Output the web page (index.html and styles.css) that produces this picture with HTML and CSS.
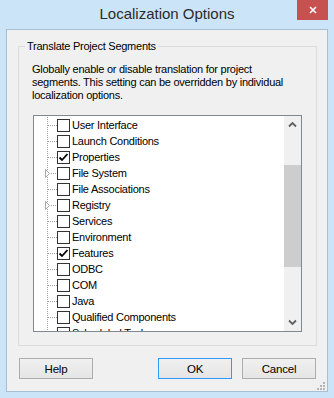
FILE: index.html
```html
<!DOCTYPE html>
<html lang="en">
<head>
    <meta charset="UTF-8">
    <title>Localization Options</title>
    <link rel="stylesheet" href="styles.css">
</head>
<body>
    <div class="window">
        <!-- Barre de titre -->
        <div class="titlebar">
            <span></span>
            <h1 class="title">Localization Options</h1>
            <button class="close" aria-label="Close">
                <svg width="8" height="8" viewBox="0 0 8 8"><path d="M1 1L7 7M7 1L1 7" stroke="#fff" stroke-width="1.6"/></svg>
            </button>
        </div>

        <div class="client">
            <fieldset class="group">
                <legend>Translate Project Segments</legend>
                <p class="desc">Globally enable or disable translation for project<br>segments. This setting can be overridden by individual<br>localization options.</p>

                <div class="tree">
                    <ul class="items">
                        <li class="item"><svg class="branch" width="23" height="16"><path d="M13.5 0V16M14 8.5H23" stroke="#a0a0a0" stroke-dasharray="1 1"/></svg><span class="check"></span><span class="label">User Interface</span></li>
                        <li class="item"><svg class="branch" width="23" height="16"><path d="M13.5 0V16M14 8.5H23" stroke="#a0a0a0" stroke-dasharray="1 1"/></svg><span class="check"></span><span class="label">Launch Conditions</span></li>
                        <li class="item"><svg class="branch" width="23" height="16"><path d="M13.5 0V16M14 8.5H23" stroke="#a0a0a0" stroke-dasharray="1 1"/></svg><span class="check on"><svg width="11" height="11" viewBox="0 0 11 11"><path d="M1.5 5.5L4 8L9.5 2" fill="none" stroke="#000" stroke-width="1.8"/></svg></span><span class="label">Properties</span></li>
                        <li class="item"><svg class="branch" width="23" height="16"><path d="M13.5 0V16M17 8.5H23" stroke="#a0a0a0" stroke-dasharray="1 1"/><path d="M11.5 4.5L15.5 8.5L11.5 12.5Z" fill="#fff" stroke="#a6a6a6"/></svg><span class="check"></span><span class="label">File System</span></li>
                        <li class="item"><svg class="branch" width="23" height="16"><path d="M13.5 0V16M14 8.5H23" stroke="#a0a0a0" stroke-dasharray="1 1"/></svg><span class="check"></span><span class="label">File Associations</span></li>
                        <li class="item"><svg class="branch" width="23" height="16"><path d="M13.5 0V16M17 8.5H23" stroke="#a0a0a0" stroke-dasharray="1 1"/><path d="M11.5 4.5L15.5 8.5L11.5 12.5Z" fill="#fff" stroke="#a6a6a6"/></svg><span class="check"></span><span class="label">Registry</span></li>
                        <li class="item"><svg class="branch" width="23" height="16"><path d="M13.5 0V16M14 8.5H23" stroke="#a0a0a0" stroke-dasharray="1 1"/></svg><span class="check"></span><span class="label">Services</span></li>
                        <li class="item"><svg class="branch" width="23" height="16"><path d="M13.5 0V16M14 8.5H23" stroke="#a0a0a0" stroke-dasharray="1 1"/></svg><span class="check"></span><span class="label">Environment</span></li>
                        <li class="item"><svg class="branch" width="23" height="16"><path d="M13.5 0V16M14 8.5H23" stroke="#a0a0a0" stroke-dasharray="1 1"/></svg><span class="check on"><svg width="11" height="11" viewBox="0 0 11 11"><path d="M1.5 5.5L4 8L9.5 2" fill="none" stroke="#000" stroke-width="1.8"/></svg></span><span class="label">Features</span></li>
                        <li class="item"><svg class="branch" width="23" height="16"><path d="M13.5 0V16M14 8.5H23" stroke="#a0a0a0" stroke-dasharray="1 1"/></svg><span class="check"></span><span class="label">ODBC</span></li>
                        <li class="item"><svg class="branch" width="23" height="16"><path d="M13.5 0V16M14 8.5H23" stroke="#a0a0a0" stroke-dasharray="1 1"/></svg><span class="check"></span><span class="label">COM</span></li>
                        <li class="item"><svg class="branch" width="23" height="16"><path d="M13.5 0V16M14 8.5H23" stroke="#a0a0a0" stroke-dasharray="1 1"/></svg><span class="check"></span><span class="label">Java</span></li>
                        <li class="item"><svg class="branch" width="23" height="16"><path d="M13.5 0V16M14 8.5H23" stroke="#a0a0a0" stroke-dasharray="1 1"/></svg><span class="check"></span><span class="label">Qualified Components</span></li>
                        <li class="item"><svg class="branch" width="23" height="16"><path d="M13.5 0V16M14 8.5H23" stroke="#a0a0a0" stroke-dasharray="1 1"/></svg><span class="check"></span><span class="label">Scheduled Tasks</span></li>
                    </ul>

                    <!-- Barre de défilement -->
                    <div class="scrollbar">
                        <div class="arrow"><svg width="17" height="17"><path d="M5 10.5L8.5 7L12 10.5" fill="none" stroke="#606060" stroke-width="1.8"/></svg></div>
                        <div class="track"><div class="thumb"></div></div>
                        <div class="arrow"><svg width="17" height="17"><path d="M5 6.5L8.5 10L12 6.5" fill="none" stroke="#606060" stroke-width="1.8"/></svg></div>
                    </div>
                </div>
            </fieldset>

            <div class="buttons">
                <button class="btn">Help</button>
                <span class="spacer"></span>
                <button class="btn default">OK</button>
                <button class="btn">Cancel</button>
            </div>

            <svg class="grip" width="10" height="9" viewBox="0 0 10 9">
                <rect x="7" y="0" width="2" height="2" fill="#b4b4b4"/>
                <rect x="4" y="3" width="2" height="2" fill="#b4b4b4"/>
                <rect x="7" y="3" width="2" height="2" fill="#b4b4b4"/>
                <rect x="1" y="6" width="2" height="2" fill="#b4b4b4"/>
                <rect x="4" y="6" width="2" height="2" fill="#b4b4b4"/>
                <rect x="7" y="6" width="2" height="2" fill="#b4b4b4"/>
            </svg>
        </div>
    </div>
</body>
</html>
```

FILE: styles.css
```css
body {
    margin: 0;
    font-family: 'Liberation Sans', Arial, sans-serif;
    font-size: 11px;
    letter-spacing: -0.25px;
    color: #000;
}

.window {
    width: 334px;
    height: 398px;
    background-color: #cce4f7;
    display: flex;
    flex-direction: column;
}

.titlebar {
    height: 29px;
    display: grid;
    grid-template-columns: 1fr auto 1fr;
}

.title {
    margin: 0;
    padding-top: 5px;
    font-size: 15px;
    font-weight: normal;
    letter-spacing: 0;
    color: #2b2b2b;
    white-space: nowrap;
}

.close {
    justify-self: end;
    width: 31px;
    height: 20px;
    margin-right: 6px;
    padding: 0;
    border: none;
    background-color: #c75050;
    display: flex;
    align-items: center;
    justify-content: center;
}

.client {
    margin: 0 6px;
    height: 363px;
    box-sizing: border-box;
    border: 1px solid #a7bfd6;
    background-color: #f0f0f0;
    display: flex;
    flex-direction: column;
}

.group {
    margin: 9px 10px 0 11px;
    padding: 9px 14px 13px 6px;
    border: 1px solid #dcdcdc;
    min-width: 0;
}

.group legend {
    padding: 0 2px;
    line-height: 15px;
}

.desc {
    margin: 0 0 13px 7px;
    line-height: 13px;
    white-space: nowrap;
}

.tree {
    margin-left: 8px;
    height: 217px;
    box-sizing: border-box;
    border: 1px solid #828790;
    background-color: #fff;
    display: flex;
}

.items {
    flex: 1;
    list-style: none;
    margin: 0;
    padding: 1px 0 0;
    overflow: hidden;
}

.item {
    height: 16px;
    display: flex;
    align-items: flex-start;
    line-height: 16px;
    white-space: nowrap;
}

.branch {
    flex: none;
}

.check {
    flex: none;
    width: 13px;
    height: 13px;
    margin-top: 2px;
    box-sizing: border-box;
    border: 1px solid #333;
    background-color: #fff;
}

.check svg {
    display: block;
}

.label {
    margin-left: 2px;
}

.scrollbar {
    width: 17px;
    background-color: #f0f0f0;
    display: flex;
    flex-direction: column;
}

.arrow {
    height: 17px;
}

.arrow svg {
    display: block;
}

.track {
    flex: 1;
}

.thumb {
    margin-top: 32px;
    height: 102px;
    background-color: #cdcdcd;
}

.buttons {
    margin: 12px 11px 0 12px;
    display: flex;
    gap: 10px;
}

.spacer {
    flex: 1;
}

.btn {
    width: 74px;
    height: 21px;
    padding: 0;
    border: 1px solid #adadad;
    background: linear-gradient(#f0f0f0, #e5e5e5);
    font-family: 'Liberation Sans', Arial, sans-serif;
    font-size: 11.5px;
    letter-spacing: -0.2px;
    color: #000;
}

.btn.default {
    border-color: #3399ff;
}

.grip {
    align-self: flex-end;
    margin: 3px 1px 0 0;
}
```
